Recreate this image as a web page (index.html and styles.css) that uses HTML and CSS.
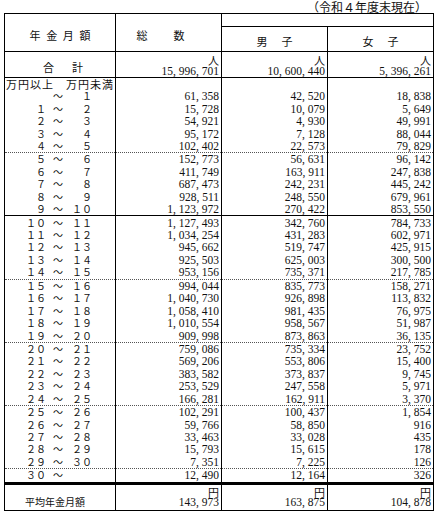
FILE: index.html
```html
<!DOCTYPE html>
<html lang="ja">
<head>
<meta charset="utf-8">
<title>年金月額別受給者数</title>
<link rel="stylesheet" href="styles.css">
</head>
<body>
<div class="page">
  <p class="caption">（令和４年度末現在）</p>
  <table class="tbl">
    <colgroup><col class="w1"><col class="w2"><col class="w2"><col class="w2"></colgroup>
    <thead>
      <tr class="h1">
        <th class="hd-amt" rowspan="2"><span class="sp s-amt">年金月額</span></th>
        <th class="hd-all" rowspan="2"><span class="sp s-all">総数</span></th>
        <th class="hd-top" colspan="2"></th>
      </tr>
      <tr class="h2">
        <th class="hd-sex"><span class="sp s-sex">男子</span></th>
        <th class="hd-sex"><span class="sp s-sex">女子</span></th>
      </tr>
    </thead>
    <tbody id="data">
      <tr class="r-total">
        <th class="lab-total"><span class="sp s-tot">合計</span></th>
        <td class="cell2"><div class="unit">人</div><div class="n">15<span class="c">,</span>996<span class="c">,</span>701</div></td>
        <td class="cell2"><div class="unit">人</div><div class="n">10<span class="c">,</span>600<span class="c">,</span>440</div></td>
        <td class="cell2"><div class="unit">人</div><div class="n">5<span class="c">,</span>396<span class="c">,</span>261</div></td>
      </tr>
      <tr class="r-units">
        <th class="lab-units">万円以上　万円未満</th><td></td><td></td><td></td>
      </tr>
    </tbody>
    <tfoot>
      <tr class="r-avg">
        <th class="lab-avg">平均年金月額</th>
        <td class="cell2 avg"><div class="unit">円</div><div class="n">143<span class="c">,</span>973</div></td>
        <td class="cell2 avg"><div class="unit">円</div><div class="n">163<span class="c">,</span>875</div></td>
        <td class="cell2 avg"><div class="unit">円</div><div class="n">104<span class="c">,</span>878</div></td>
      </tr>
    </tfoot>
  </table>
</div>
<script src="script.js"></script>
</body>
</html>
```

FILE: styles.css
```css
html, body {
  margin: 0;
  background: #fff;
}
body {
  font-family: "Noto Sans CJK JP", sans-serif;
  color: #111;
}
.page {
  width: 429px;
  padding-left: 4px;
}
.caption {
  margin: 0;
  height: 13px;
  font-size: 12px;
  line-height: 13px;
  text-align: right;
  padding-right: 6px;
  white-space: nowrap;
}
.tbl {
  border-collapse: collapse;
  table-layout: fixed;
  width: 429px;
  border: 1px solid #000;
}
.w1 { width: 111px; }
.w2 { width: 106px; }
.tbl th, .tbl td {
  padding: 0;
  border-left: 1px solid #000;
  border-right: 1px solid #000;
  font-weight: normal;
  vertical-align: middle;
  white-space: nowrap;
}
/* header */
.h1 th { height: 12px; }
.h2 th { height: 24px; border-bottom: 1px solid #000; }
.hd-amt, .hd-all { border-bottom: 1px solid #000; }
.hd-all { border-right: none; }
.hd-top { border-left: none; border-bottom: none; }
.hd-sex { border-top: 1px solid #000; border-left: 1px solid #000; padding-top: 3px; }
.sp {
  display: inline-block;
  font-size: 11px;
  line-height: 12px;
}
.s-amt { letter-spacing: 5.7px; padding-left: 5.7px; }
.s-all { letter-spacing: 26px; padding-left: 10px; }
.s-sex { letter-spacing: 14px; padding-left: 14px; }
.s-tot { letter-spacing: 18px; padding-left: 18px; margin-left: 6px; }
/* total row */
.r-total td, .r-total th { height: 25px; border-bottom: 1px solid #000; }
.cell2 { vertical-align: top; text-align: right; padding-right: 2px !important; }
.unit {
  font-size: 11px;
  line-height: 11px;
  padding-top: 2px;
}
.n {
  font-family: "Liberation Serif", serif;
  font-size: 11.5px;
  line-height: 11px;
  text-align: right;
}
.c { margin-right: 0.25em; }
/* units label row */
.r-units th, .r-units td { height: 12px; }
.lab-units {
  text-align: left;
  font-size: 11px;
  line-height: 12px;
  letter-spacing: 1px;
  padding-left: 1px !important;
}
/* data rows */
.row th, .row td { height: 12.45px; }
.row td {
  text-align: right;
  padding-right: 2px;
}
.row .n { line-height: 12px; }
.row.dot th, .row.dot td { border-top: 1px dotted #555; }
.row.sol th, .row.sol td { border-top: 1px solid #000; }
.rg {
  display: flex;
  font-size: 10px;
  line-height: 12px;
}
.rg .a { width: 41px; text-align: right; }
.rg .t { width: 10px; margin-left: 7px; text-align: center; }
.rg .b { width: 29px; text-align: right; }
/* average row */
.r-avg th, .r-avg td { height: 23px; border-top: 3px solid #000; }
.lab-avg {
  vertical-align: bottom !important;
  text-align: left;
  font-size: 10px;
  line-height: 12px;
  padding: 0 0 2px 20px !important;
}
.avg .unit { padding-top: 1px; line-height: 10px; }
```

FILE: script.js
```js
(function () {
  var rows = [
    ["", "１", 61358, 42520, 18838],
    ["１", "２", 15728, 10079, 5649],
    ["２", "３", 54921, 4930, 49991],
    ["３", "４", 95172, 7128, 88044],
    ["４", "５", 102402, 22573, 79829],
    ["５", "６", 152773, 56631, 96142],
    ["６", "７", 411749, 163911, 247838],
    ["７", "８", 687473, 242231, 445242],
    ["８", "９", 928511, 248550, 679961],
    ["９", "１０", 1123972, 270422, 853550],
    ["１０", "１１", 1127493, 342760, 784733],
    ["１１", "１２", 1034254, 431283, 602971],
    ["１２", "１３", 945662, 519747, 425915],
    ["１３", "１４", 925503, 625003, 300500],
    ["１４", "１５", 953156, 735371, 217785],
    ["１５", "１６", 994044, 835773, 158271],
    ["１６", "１７", 1040730, 926898, 113832],
    ["１７", "１８", 1058410, 981435, 76975],
    ["１８", "１９", 1010554, 958567, 51987],
    ["１９", "２０", 909998, 873863, 36135],
    ["２０", "２１", 759086, 735334, 23752],
    ["２１", "２２", 569206, 553806, 15400],
    ["２２", "２３", 383582, 373837, 9745],
    ["２３", "２４", 253529, 247558, 5971],
    ["２４", "２５", 166281, 162911, 3370],
    ["２５", "２６", 102291, 100437, 1854],
    ["２６", "２７", 59766, 58850, 916],
    ["２７", "２８", 33463, 33028, 435],
    ["２８", "２９", 15793, 15615, 178],
    ["２９", "３０", 7351, 7225, 126],
    ["３０", "", 12490, 12164, 326]
  ];
  function fmt(n) {
    var s = String(n), out = "";
    for (var i = 0; i < s.length; i++) {
      if (i > 0 && (s.length - i) % 3 === 0) out += '<span class="c">,</span>';
      out += s.charAt(i);
    }
    return out;
  }
  var body = document.getElementById("data");
  var html = "";
  for (var i = 0; i < rows.length; i++) {
    var r = rows[i];
    var cls = "row";
    if (i === 5 || i === 15 || i === 20 || i === 25 || i === 30) cls += " dot";
    if (i === 10) cls += " sol";
    html += '<tr class="' + cls + '"><th><div class="rg"><span class="a">' + r[0] +
      '</span><span class="t">～</span><span class="b">' + r[1] + '</span></div></th>' +
      '<td><div class="n">' + fmt(r[2]) + '</div></td>' +
      '<td><div class="n">' + fmt(r[3]) + '</div></td>' +
      '<td><div class="n">' + fmt(r[4]) + '</div></td></tr>';
  }
  body.insertAdjacentHTML("beforeend", html);
})();
```
